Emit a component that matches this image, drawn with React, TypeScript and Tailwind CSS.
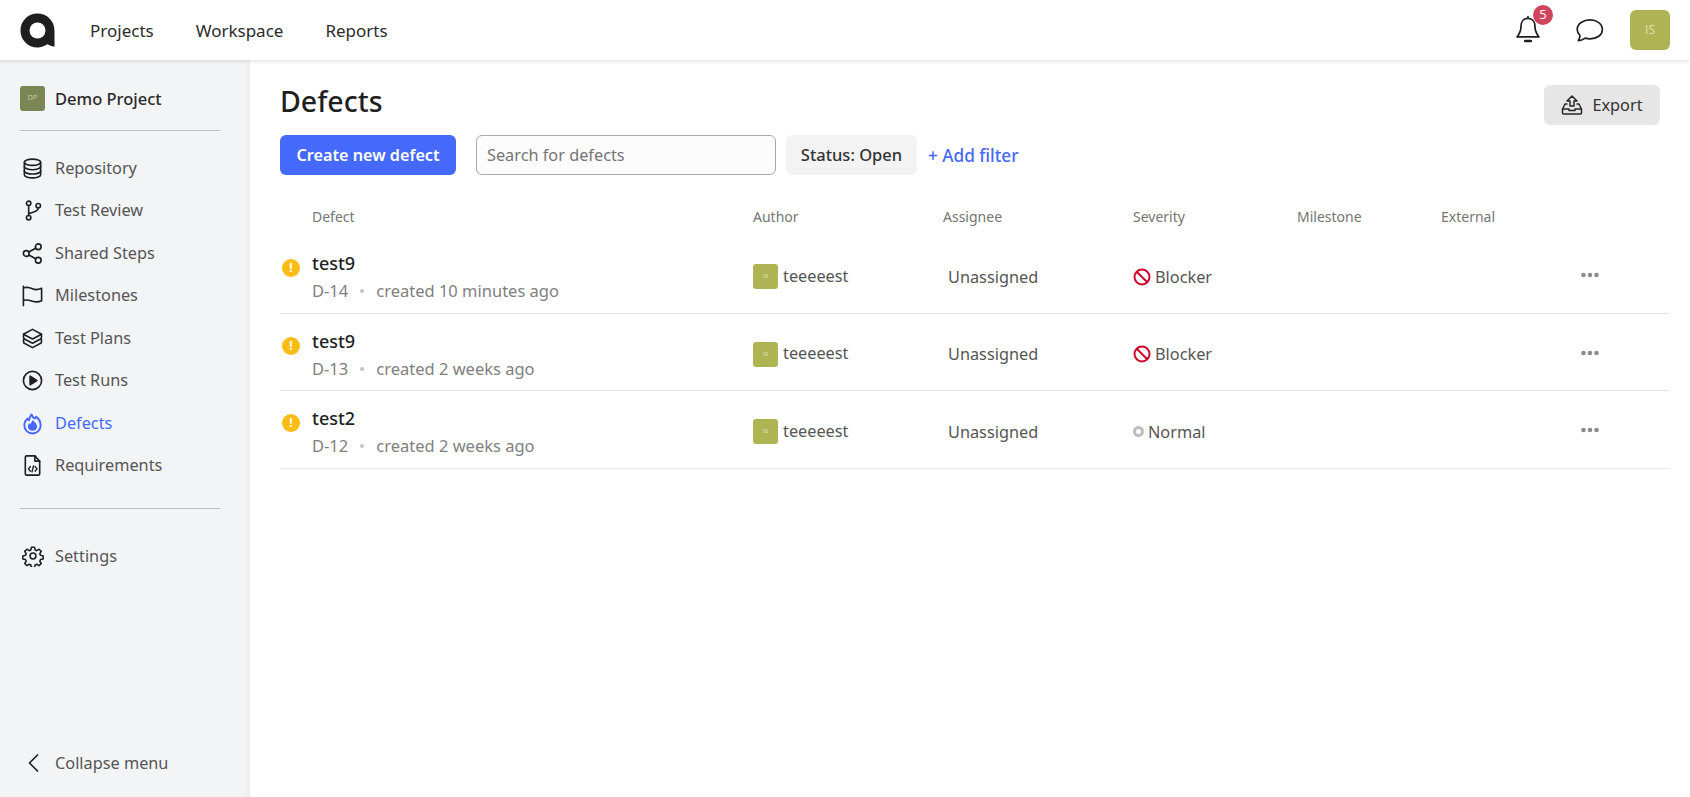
import { ReactNode } from "react";

const FONT = "font-['Noto_Sans',sans-serif]";

function Ic({ children, size = 24, className = "" }: { children: ReactNode; size?: number; className?: string }) {
  return (
    <svg
      width={size}
      height={size}
      viewBox="0 0 24 24"
      fill="none"
      stroke="currentColor"
      strokeWidth="1.7"
      strokeLinecap="round"
      strokeLinejoin="round"
      className={className}
    >
      {children}
    </svg>
  );
}

const NAV: { label: string; icon: ReactNode; active?: boolean }[] = [
  {
    label: "Repository",
    icon: (
      <>
        <ellipse cx="12" cy="5.500" rx="8.500" ry="3.300" />
        <path d="M3.500 5.500v13c0 1.800 3.800 3.300 8.500 3.300s8.500-1.500 8.500-3.300v-13" />
        <path d="M3.500 10c0 1.800 3.800 3.300 8.500 3.300s8.500-1.500 8.500-3.300M3.500 14.500c0 1.800 3.800 3.300 8.500 3.300s8.500-1.500 8.500-3.300" />
      </>
    ),
  },
  {
    label: "Test Review",
    icon: (
      <>
        <circle cx="8" cy="4.500" r="2.300" />
        <circle cx="8" cy="19.500" r="2.300" />
        <circle cx="18" cy="7" r="2.300" />
        <path d="M8 6.800v10.400M18 9.300c0 4-6 4.200-10 6" />
      </>
    ),
  },
  {
    label: "Shared Steps",
    icon: (
      <>
        <circle cx="5.500" cy="12" r="3" />
        <circle cx="18" cy="5" r="3" />
        <circle cx="18" cy="19" r="3" />
        <path d="M8.200 10.500 15.300 6.500M8.200 13.500l7.100 4" />
      </>
    ),
  },
  {
    label: "Milestones",
    icon: (
      <path d="M2.500 2.500v20M2.500 4c3.500-1 6.500-.5 9.500 1s6 1 9.500-.5v13c-3.500 1.500-6.500 1.500-9.500.5s-6-2-9.500-1" />
    ),
  },
  {
    label: "Test Plans",
    icon: (
      <>
        <path d="M12 2.500 2.500 7.500 12 12.500l9.500-5z" />
        <path d="M3 12.200l9 4.800 9-4.800" />
        <path d="M3 16.700l9 4.800 9-4.800M3 12l-.5 2.300.5 2.400M21 12l.5 2.300-.5 2.400M21 7.500l.5 2.300-.5 2.400M3 7.500l-.5 2.300.5 2.400" />
      </>
    ),
  },
  {
    label: "Test Runs",
    icon: (
      <>
        <circle cx="12" cy="12" r="9.500" />
        <path d="M9.500 7.500v9l7-4.500z" fill="currentColor" />
      </>
    ),
  },
  {
    label: "Defects",
    active: true,
    icon: (
      <>
        <path
          d="M11 2.500c.8 2.500 1.500 3.500 2.800 4 1 .3 1.700-.6 1.900-1.700C18.500 6.800 20.500 10 20.500 14a8.500 8.500 0 0 1-17 0c0-3.300 1.500-5.700 3.500-7.200.3 1 .7 1.700 1.300 1.800.5-2.300 1-4.300 2.700-6.100z"
          strokeWidth="2"
        />
        <path
          d="M12.500 9.500c.3 1.500 3.500 2.500 3.500 5.300a4 4 0 0 1-8 0c0-.8.3-1.500.8-2 .7.600 1.500.6 2-.1.500-.8 1-2 1.700-3.200z"
          fill="currentColor"
        />
      </>
    ),
  },
  {
    label: "Requirements",
    icon: (
      <>
        <path d="M4.500 3.500a1.500 1.500 0 0 1 1.500-1.500h8.500l5 5.500V20.500a1.500 1.500 0 0 1-1.500 1.500H6a1.500 1.500 0 0 1-1.500-1.500z" />
        <path d="M14.500 2v5.500h5" />
        <path d="m9.800 13-2 2.500 2 2.500M14.700 13l2 2.500-2 2.500M13 12.500l-1.500 6" strokeWidth="1.400" />
      </>
    ),
  },
];

const ROWS = [
  { title: "test9", id: "D-14", when: "created 10 minutes ago", severity: "Blocker" },
  { title: "test9", id: "D-13", when: "created 2 weeks ago", severity: "Blocker" },
  { title: "test2", id: "D-12", when: "created 2 weeks ago", severity: "Normal" },
];

function TopBar() {
  return (
    <header className="relative z-10 flex h-[60px] items-center bg-white pl-5 pr-5 shadow-[0_1px_4px_rgba(0,0,0,0.14)]">
      <svg width="35" height="35" viewBox="0 0 35 35" className="shrink-0">
        <path
          d="M17.500 0.500C27 0.500 34.500 8 34.500 17.500V33.800C31.500 33.500 29.500 32 27.500 31.300 24.500 33.300 21 34.500 17.500 34.500 8 34.500 0.500 27 0.500 17.500S8 0.500 17.500 0.500Z"
          fill="#1f1f1f"
        />
        <circle cx="17.500" cy="17.500" r="8" fill="#fff" />
      </svg>
      <nav className="ml-[35px] mt-[2px] flex gap-[42px] text-[17px] text-[#2b2b2b]">
        <span>Projects</span>
        <span>Workspace</span>
        <span>Reports</span>
      </nav>
      <div className="ml-auto flex items-center">
        <div className="relative text-[#1f1f1f]">
          <svg width="28" height="30" viewBox="0 0 24 26" fill="none" stroke="currentColor" strokeWidth="1.500" strokeLinejoin="round" strokeLinecap="round">
            <path d="M12 3c-4 0-6 3-6 6.500 0 5-1.500 7-3.500 9.500h19c-2-2.500-3.500-4.500-3.500-9.500C18 6 16 3 12 3zM12 1.500V3" />
            <path d="M9.500 22.500h5" strokeWidth="2.200" />
          </svg>
          <span className="absolute -right-[11px] -top-[10px] flex h-5 w-5 items-center justify-center rounded-full bg-[#d0435e] text-[13px] text-white">
            5
          </span>
        </div>
        <svg width="29" height="27" viewBox="0 0 26 24" fill="none" stroke="#1f1f1f" strokeWidth="1.500" strokeLinejoin="round" className="ml-[33px]">
          <path d="M13.500 2.500C7.500 2.500 2 6 2 11c0 2.300 1 4 2.500 5.500 0 1.500-.8 3.500-1.500 4.500 2.500 0 4.500-1 6-2.200 1.300.4 2.800.7 4.500.7 6 0 11-3.500 11-8.500s-5-8.500-11-8.500z" />
        </svg>
        <div className="ml-[26px] flex h-10 w-10 items-center justify-center rounded-md bg-[#aeb454] font-['Open_Sans',sans-serif] text-[12px] text-[#dfe2b0]">
          IS
        </div>
      </div>
    </header>
  );
}

function Sidebar() {
  return (
    <aside className="flex w-[250px] shrink-0 flex-col bg-[#f3f4f6] pl-5 pr-[30px] pb-[22px] shadow-[inset_-8px_0_6px_-6px_rgba(0,0,0,0.035)]">
      <div className="flex items-center gap-[10px] border-b border-[#bdbec2] pb-[18px] pt-[25px]">
        <div className="flex h-[25px] w-[25px] items-center justify-center rounded-[3px] bg-[#7c8654] font-['Open_Sans',sans-serif] text-[7px] text-[#c5ccaa]">
          DP
        </div>
        <span className="mt-[2px] text-[16.500px] font-medium text-[#2b2b2b]">Demo Project</span>
      </div>
      <ul className="mt-[16px] flex flex-col border-b border-[#bdbec2] pb-[21px]">
        {NAV.map((n) => (
          <li
            key={n.label}
            className={`flex h-[42.500px] items-center gap-[10px] text-[16.300px] ${n.active ? "text-[#4469fb]" : "text-[#555]"}`}
          >
            <span className={`flex w-[25px] justify-center ${n.active ? "text-[#4469fb]" : "text-[#1f1f1f]"}`}>
              <Ic size={23}>{n.icon}</Ic>
            </span>
            {n.label}
          </li>
        ))}
      </ul>
      <div className="mt-[26px] flex h-[42px] items-center gap-[10px] text-[16.300px] text-[#555]">
        <span className="flex w-[25px] justify-center text-[#1f1f1f]">
          <Ic size={22}>
            <circle cx="12" cy="12" r="3.200" />
            <path d="M10.300 2.500h3.400l.6 2.900 1.800.8 2.500-1.600 2.400 2.400-1.600 2.500.8 1.800 2.900.6v3.400l-2.900.6-.8 1.800 1.600 2.500-2.400 2.400-2.500-1.600-1.800.8-.6 2.900h-3.400l-.6-2.900-1.800-.8-2.500 1.600-2.400-2.400 1.600-2.500-.8-1.800-2.900-.6v-3.400l2.900-.6.8-1.800-1.600-2.500 2.400-2.400 2.500 1.600 1.800-.8z" />
          </Ic>
        </span>
        Settings
      </div>
      <div className="mt-auto flex items-center gap-[10px] text-[16.300px] text-[#555]">
        <span className="flex w-[25px] justify-center text-[#1f1f1f]">
          <Ic size={24}>
            <path d="m16.500 4-8 8 8 8" />
          </Ic>
        </span>
        Collapse menu
      </div>
    </aside>
  );
}

function Severity({ value }: { value: string }) {
  if (value === "Blocker") {
    return (
      <span className="flex items-center gap-[4px]">
        <svg width="18" height="18" viewBox="0 0 18 18" fill="none" stroke="#d0082c" strokeWidth="2">
          <circle cx="9" cy="9" r="7.500" />
          <path d="m3.700 3.700 10.600 10.600" />
        </svg>
        {value}
      </span>
    );
  }
  return (
    <span className="flex items-center gap-[4px]">
      <span className="h-[11px] w-[11px] rounded-full border-[3px] border-[#bdbdbd]" />
      {value}
    </span>
  );
}

function Row({ r }: { r: (typeof ROWS)[number] }) {
  return (
    <div className="flex h-[77.500px] items-center border-b border-[#e8e8e8] pt-[5px] text-[16.300px]">
      <div className="flex w-[473px] shrink-0 items-start">
        <div className="ml-[2px] mt-[9px] flex h-[18px] w-[18px] items-center justify-center rounded-full bg-[#fdbb16] text-[12px] font-bold text-white">
          !
        </div>
        <div className="ml-[12px]">
          <div className="text-[18px] font-medium leading-[26px] text-[#1f1f1f]">{r.title}</div>
          <div className="mt-[3px] flex items-center text-[16.500px] leading-[24px] text-[#808080]">
            {r.id}
            <span className="mx-[12px] h-[4px] w-[4px] rounded-full bg-[#c4c4c4]" />
            {r.when}
          </div>
        </div>
      </div>
      <div className="flex w-[195px] shrink-0 items-center gap-[5px] text-[#555]">
        <div className="flex h-[25px] w-[25px] items-center justify-center rounded-[3px] bg-[#aeb454] font-['Open_Sans',sans-serif] text-[6px] text-[#e6e8c4]">
          IS
        </div>
        <span className="-mt-[2px]">teeeeest</span>
      </div>
      <div className="w-[185px] shrink-0 text-[#555]">Unassigned</div>
      <div className="text-[#555]">
        <Severity value={r.severity} />
      </div>
      <svg width="18" height="6" viewBox="0 0 18 6" fill="#8c8c8c" className="ml-auto mr-[71px] -mt-[3px]">
        <circle cx="2.500" cy="3" r="2.300" />
        <circle cx="9" cy="3" r="2.300" />
        <circle cx="15.500" cy="3" r="2.300" />
      </svg>
    </div>
  );
}

export default function App() {
  return (
    <div className={`flex h-[797px] flex-col overflow-hidden bg-white ${FONT}`}>
      <TopBar />
      <div className="flex flex-1 overflow-hidden">
        <Sidebar />
        <main className="flex-1 pl-[30px] pr-5">
          <div className="flex items-start justify-between">
            <h1 className="mt-[20px] text-[28.500px] font-medium leading-[42px] text-[#1f1f1f]">Defects</h1>
            <button
              type="button"
              className="mr-[10px] mt-[25px] flex h-10 w-[116px] items-center justify-center gap-[9px] rounded-md bg-[#e6e6e6] text-[16.300px] text-[#333]"
            >
              <svg width="22" height="22" viewBox="0 0 22 22" fill="none" stroke="#262626" strokeWidth="1.500" strokeLinejoin="round">
                <path d="M11 2 6 7h3v5h4V7h3z" />
                <path d="M6.500 10H4l-2.500 5v4a1 1 0 0 0 1 1h17a1 1 0 0 0 1-1v-4L18 10h-2.500" />
                <path d="M1.500 15H8v1.500h6V15h6.500" />
              </svg>
              <span className="mt-[1px]">Export</span>
            </button>
          </div>
          <div className="mt-[10px] flex items-center">
            <button type="button" className="h-10 w-[176px] rounded-md bg-[#4469fb] text-[16.200px] font-semibold text-white">
              Create new defect
            </button>
            <div className="ml-5 flex h-10 w-[300px] items-center rounded-md border border-[#a8a8a8] bg-[#fcfcfc] px-[10px] text-[16.300px] text-[#757575]">
              Search for defects
            </div>
            <div className="ml-[10px] flex h-10 w-[131px] items-center justify-center rounded-md bg-[#f3f3f3] text-[16.500px] font-medium text-[#333]">
              Status: Open
            </div>
            <span className="ml-[11px] mt-[2px] text-[17.200px] font-medium text-[#4469fb]">+ Add filter</span>
          </div>
          <div className="mt-[29px] flex h-[26px] items-center pl-[32px] text-sm text-[#757575]">
            <span className="w-[441px] shrink-0">Defect</span>
            <span className="w-[190px] shrink-0">Author</span>
            <span className="w-[190px] shrink-0">Assignee</span>
            <span className="w-[164px] shrink-0">Severity</span>
            <span className="w-[144px] shrink-0">Milestone</span>
            <span>External</span>
          </div>
          <div className="mt-[6px]">
            {ROWS.map((r) => (
              <Row key={r.id} r={r} />
            ))}
          </div>
        </main>
      </div>
    </div>
  );
}
